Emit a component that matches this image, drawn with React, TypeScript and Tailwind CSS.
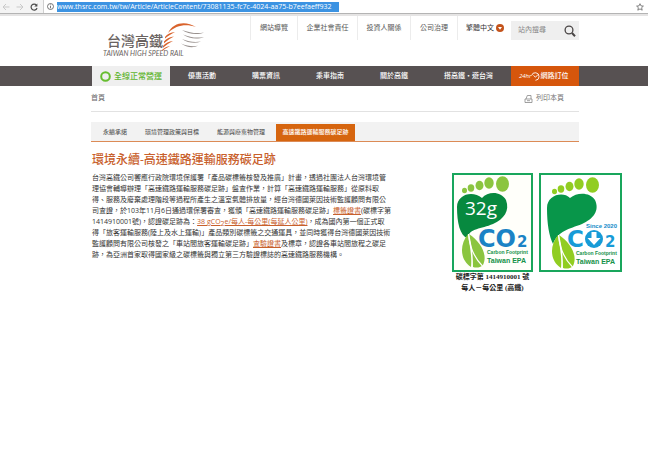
import React from "react";

const topLinks = [
  { label: "網站導覽", width: "w-[47px]" },
  { label: "企業社會責任", width: "w-[60px]" },
  { label: "投資人關係", width: "w-[53px]" },
  { label: "公司治理", width: "w-[47px]" },
];

const menu = ["優惠活動", "購票資訊", "乘車指南", "關於高鐵"];

const tabs = ["永續承諾", "環境管理政策與目標", "能源與廢棄物管理"];

function AddressBar() {
  return (
    <div className="flex h-[14px] items-center border-b border-[#b4b4b4] bg-[#f4f4f4]">
      <div className="flex w-[43px] shrink-0 items-center gap-[6px] pl-[2px]">
        <button aria-label="Back">
          <svg className="block h-[8px] w-[8px]" viewBox="0 0 8 8" fill="none" stroke="#c9c9c9">
            <path d="M7.5 4H1M4 1 1 4l3 3" />
          </svg>
        </button>
        <button aria-label="Forward">
          <svg className="block h-[8px] w-[8px]" viewBox="0 0 8 8" fill="none" stroke="#c9c9c9">
            <path d="M.5 4H7M4 1l3 3-3 3" />
          </svg>
        </button>
        <button aria-label="Reload">
          <svg className="block h-[8px] w-[8px]" viewBox="0 0 8 8" fill="none" stroke="#4d4d4d" strokeWidth="1.2">
            <path d="M6.5 2.3A3 3 0 1 0 7 5" />
            <path d="M7.4.5v3.1H4.3z" fill="#4d4d4d" stroke="none" />
          </svg>
        </button>
      </div>
      <div className="flex h-[13px] min-w-0 flex-1 items-center border-l border-[#cfcfcf] bg-white pl-[3px]">
        <svg className="mr-[3px] h-[7px] w-[7px] shrink-0" viewBox="0 0 7 7" fill="none" stroke="#555" strokeWidth=".8">
          <circle cx="3.5" cy="3.5" r="3" />
          <path d="M3.5 3v2.3M3.5 1.5v.8" />
        </svg>
        <input
          aria-label="Address"
          readOnly
          className="h-[10px] w-[282px] bg-[#3c93e2] text-[7px] leading-[10px] text-white outline-none"
          value="www.thsrc.com.tw/tw/Article/ArticleContent/73081135-fc7c-4024-aa75-b7eefaeff932"
        />
        <button aria-label="Bookmark" className="ml-auto mr-[4px]">
          <svg className="block h-[8px] w-[8px]" viewBox="0 0 8 8" fill="none" stroke="#666" strokeWidth=".8">
            <path d="m4 .7 1 2.2 2.4.2-1.8 1.6.6 2.5L4 5.9 1.8 7.2l.6-2.5L.6 3.1 3 2.9z" />
          </svg>
        </button>
      </div>
    </div>
  );
}

function Logo() {
  return (
    <svg className="block h-[38px] w-[104px]" viewBox="0 0 104 38" role="img" aria-label="台灣高鐵">
      <text x="4" y="25" fontSize="14" fontWeight="500" fill="#6a6361" fontFamily="'Noto Sans CJK TC', sans-serif">台灣高鐵</text>
      <text x="0" y="35" fontSize="7" fontStyle="italic" fill="#6a6361" fontFamily="Lato, sans-serif">TAIWAN HIGH SPEED RAIL</text>
      <g fill="#d9632c">
        <path d="M65 12C70 1 83-.5 93 6 83 2.800 73 4 65 12" />
        <path d="M62 16c2-3 6-4.500 10-5-4 1.800-6.500 3.800-10 6.500z" />
        <path d="M61 20.500c2.500-3 6-4.500 10-5-4 1.800-6.500 4-10 6.700z" />
        <path d="M60 25c2.500-3 6-4.500 10-5-4 1.800-6.500 4-10 6.700z" />
        <path d="M59 29c2.500-2.500 5-3.600 8-4-3 1.500-5 3-8 5z" />
      </g>
      <g fill="#99918e">
        <path d="M79 9c8 3 15 3.800 22 2.500-7 2.800-16 1.500-22-2.500" />
        <path d="M80 13.500c7 3 14 3.800 21 2.500-7 2.800-15 1.500-21-2.500" />
        <path d="M79 18c7 3 13 3.500 19 2.500-6 2.500-13 1.500-19-2.500" />
        <path d="M78 22.500c6 2.700 12 3.300 17 2.300-5 2.400-12 1.500-17-2.300" />
      </g>
    </svg>
  );
}

function Header() {
  return (
    <header className="flex h-[50px] items-start border-t-2 border-[#e5e4e4] pl-[91px] pr-[69px] text-[7px] text-[#555]">
      <a href="#home" className="ml-[12px] mt-[5px] w-[104px] shrink-0">
        <Logo />
      </a>
      <nav className="ml-auto flex h-[24px]">
        {topLinks.map((l) => (
          <a key={l.label} href="#top" className={"flex items-center justify-center border-l border-[#ececec] " + l.width}>
            {l.label}
          </a>
        ))}
      </nav>
      <div className="flex h-[24px] w-[54px] shrink-0 items-center border-l border-[#ececec] pl-[8px]">
        <select aria-label="語言" className="w-[28px] appearance-none bg-transparent text-[#333]">
          <option>繁體中文</option>
        </select>
        <svg className="ml-[2px] h-[8px] w-[8px] shrink-0" viewBox="0 0 8 8">
          <circle cx="4" cy="4" r="4" fill="#c4541c" />
          <path d="M2 3h4L4 5.800z" fill="#fff" />
        </svg>
      </div>
      <form className="mt-[5px] flex h-[19px] w-[68px] shrink-0 items-center bg-[#efefef] pl-[7px]">
        <input aria-label="站內搜尋" placeholder="站內搜尋" className="w-[46px] bg-transparent outline-none placeholder:text-[#888]" />
        <button type="button" aria-label="搜尋">
          <svg className="block h-[12px] w-[12px]" viewBox="0 0 12 12" fill="none" stroke="#494545">
            <circle cx="5" cy="5" r="3.900" strokeWidth="1.300" />
            <path d="m8 8 3 3.200" strokeWidth="2" />
          </svg>
        </button>
      </form>
    </header>
  );
}

function MainNav() {
  return (
    <nav className="flex h-[20px] bg-[#575152] pl-[92px] pr-[69px] text-[7px] font-medium text-white">
      <a href="#status" className="flex w-[78px] shrink-0 items-center gap-[3px] bg-[#efefef] pl-[8px] text-[8px] text-[#5fb52f]">
        <svg className="h-[11px] w-[11px] shrink-0" viewBox="0 0 11 11">
          <circle cx="5.500" cy="5.500" r="4.300" fill="none" stroke="#66bd2f" strokeWidth="2" />
        </svg>
        全線正常營運
      </a>
      {menu.map((m) => (
        <a key={m} href="#menu" className="flex flex-1 items-center justify-center">{m}</a>
      ))}
      <a href="#travel" className="flex w-[85px] shrink-0 items-center justify-center">搭高鐵・遊台灣</a>
      <a href="#booking" className="flex w-[68px] shrink-0 items-center bg-[#d6560c] pl-[8px]">
        <span className="text-[6px] italic">24hr</span>
        <svg className="h-[9px] w-[9px] shrink-0" viewBox="0 0 9 9" fill="none" stroke="#fff" strokeWidth=".9">
          <path d="M.6 3.500A3.800 3.800 0 1 1 4.500 8.300M2.500 3.500l2 1.700L7 2.500" />
        </svg>
        網路訂位
      </a>
    </nav>
  );
}

function Toes({ light }: { light: string }) {
  return (
    <g fill={light}>
      <ellipse cx="12.500" cy="17.500" rx="2.500" ry="2.800" />
      <ellipse cx="19" cy="15" rx="3.300" ry="3.700" />
      <ellipse cx="27.500" cy="12.500" rx="4" ry="4.700" />
      <ellipse cx="37" cy="10" rx="4.700" ry="5.700" />
      <ellipse cx="50.500" cy="11" rx="6.500" ry="7.800" />
    </g>
  );
}

function Leaf({ light }: { light: string }) {
  return (
    <g>
      <path d="M16 61C8 71 7 86 19 94c1-10-1-20-3-33" fill={light} />
      <path d="M17 61c12 8 19 21 14 31-3 3-7 3-10 2 0-11-1-21-4-33" fill={light} />
      <path d="M16.500 61c1 12 5 23 14 32" fill="none" stroke="#fff" strokeWidth="1.200" />
    </g>
  );
}

function LabelWithWeight() {
  return (
    <svg className="block h-[99px] w-[81px]" viewBox="0 0 81 99" role="img" aria-label="32g CO2 Carbon Footprint Taiwan EPA">
      <rect x="1" y="1" width="79" height="97" fill="#fffffa" stroke="#19a65c" strokeWidth="2" />
      <Toes light="#8bc53f" />
      <path d="M5 34C5 21 21 17 30 25c6-7 19-7 24 2 4 11-2 19-13 24-12 5-23 4-26 14C8 62 5 50 5 34" fill="#07893f" />
      <Leaf light="#8bc53f" />
      <text x="13" y="42" fontSize="19" fill="#fff" fontFamily="'Open Sans', sans-serif">32g</text>
      <g fontFamily="'DejaVu Sans', sans-serif" fontWeight="700" fill="#1b83c5">
        <text x="26" y="74" fontSize="24">CO</text>
        <text x="65" y="74" fontSize="15">2</text>
      </g>
      <g fill="#15914a" fontFamily="'Liberation Sans', sans-serif">
        <text x="35" y="81" fontSize="5" fontWeight="700">Carbon Footprint</text>
        <text x="35" y="90" fontSize="7" fontWeight="700">Taiwan EPA</text>
      </g>
    </svg>
  );
}

function LabelWithDate() {
  return (
    <svg className="block h-[99px] w-[83px]" viewBox="0 0 83 99" role="img" aria-label="Since 2020 CO2 Carbon Footprint Taiwan EPA">
      <rect x="1" y="1" width="81" height="97" fill="#fff" stroke="#19a65c" strokeWidth="2" />
      <g transform="translate(3 1)">
        <Toes light="#91cd22" />
        <path d="M5 34C5 21 21 17 28 24c7-6 20-6 25 2 5 11-2 19-13 24-13 5-24 7-29 20C7 62 5 50 5 34" fill="#08964a" />
        <Leaf light="#91cd22" />
      </g>
      <text x="47" y="55" fontSize="6" fontWeight="700" fill="#148cc9" fontFamily="'Liberation Sans', sans-serif">Since 2020</text>
      <g fontFamily="'DejaVu Sans', sans-serif" fontWeight="700" fill="#179bd7">
        <text x="28" y="74" fontSize="23">C</text>
        <circle cx="55" cy="66" r="9" />
        <text x="66" y="74" fontSize="15">2</text>
      </g>
      <path d="M52.500 59h5v6h4l-6.500 7-6.500-7h4z" fill="#fff" />
      <g fill="#15914a" fontFamily="'Liberation Sans', sans-serif">
        <text x="37" y="82" fontSize="5" fontWeight="700">Carbon Footprint</text>
        <text x="37" y="91" fontSize="7" fontWeight="700">Taiwan EPA</text>
      </g>
    </svg>
  );
}

const linkStyle = "text-[#c8602c] underline underline-offset-1";

function Article() {
  return (
    <div className="flex items-start pl-[92px]">
      <article className="w-[360px] shrink-0">
        <h1 className="mt-[9px] text-[12px] font-medium leading-[18px] text-[#c8602c]">環境永續-高速鐵路運輸服務碳足跡</h1>
        <p className="mt-[3px] whitespace-nowrap text-[7px] leading-[11px] text-[#333]">
          台灣高鐵公司響應行政院環境保護署「產品碳標籤核發及推廣」計畫，透過社團法人台灣環境管<br />
          理協會輔導辦理「高速鐵路運輸服務碳足跡」盤查作業，計算「高速鐵路運輸服務」從原料取<br />
          得、服務及廢棄處理階段等過程所產生之溫室氣體排放量，經台灣德國萊因技術監護顧問有限公<br />
          司查證，於103年11月6日通過環保署審查，獲頒「高速鐵路運輸服務碳足跡」<a href="#label" className={linkStyle}>標籤證書</a>(碳標字第<br />
          1414910001號)，認證碳足跡為：<a href="#result" className={linkStyle}>38 gCO<sub className="text-[7px] leading-[11px]">2</sub>e/每人-每公里(每延人公里)</a>，成為國內第一個正式取<br />
          得「旅客運輸服務(陸上及水上運輸)」產品類別碳標籤之交通運具，並同時獲得台灣德國萊因技術<br />
          監護顧問有限公司核發之「車站間旅客運輸碳足跡」<a href="#check" className={linkStyle}>查驗證書</a>及標章，認證各車站間旅程之碳足<br />
          跡，為亞洲首家取得國家級之碳標籤與獨立第三方驗證標誌的高速鐵路服務機構。
        </p>
      </article>
      <div className="mt-[31px] flex shrink-0 gap-[6px]">
        <figure className="w-[81px]">
          <LabelWithWeight />
          <figcaption className="whitespace-nowrap text-center font-['Liberation_Serif','Noto_Sans_CJK_TC',serif] text-[7px] font-bold leading-[11px] text-[#222]">
            碳標字第 1414910001 號<br />每人－每公里 (高鐵)
          </figcaption>
        </figure>
        <LabelWithDate />
      </div>
    </div>
  );
}

export default function App() {
  return (
    <div lang="zh-Hant" className="min-h-screen bg-white font-['Open_Sans','Noto_Sans_CJK_TC',sans-serif]">
      <AddressBar />
      <main>
        <Header />
        <div className="mt-[2px]">
          <MainNav />
        </div>
        <div className="ml-[91px] mr-[69px] flex h-[26px] items-center justify-between border-b border-[#e2e2e2] text-[7px] text-[#666]">
          <a href="#home">首頁</a>
          <button className="mr-[15px] flex items-center gap-[3px] text-[#777]">
            <svg className="h-[8px] w-[9px]" viewBox="0 0 9 8" fill="none" stroke="#888" strokeWidth=".8">
              <path d="M2 4 3.300.5H7V4M1 4h7v3.500H1zM3 5.700h3" />
            </svg>
            列印本頁
          </button>
        </div>
        <nav className="ml-[91px] mr-[69px] mt-[10px] flex h-[20px] items-end gap-[18px] border-b border-[#dc8b56] bg-[#f2f2f2] pl-[12px] text-[6px] leading-[17px] text-[#444]">
          {tabs.map((t) => (
            <a key={t} href="#tab">{t}</a>
          ))}
          <a href="#active" className="-ml-[7px] flex h-[17px] w-[79px] items-center justify-center bg-[#d6650f] font-medium text-white">
            高速鐵路運輸服務碳足跡
          </a>
        </nav>
        <Article />
      </main>
    </div>
  );
}
